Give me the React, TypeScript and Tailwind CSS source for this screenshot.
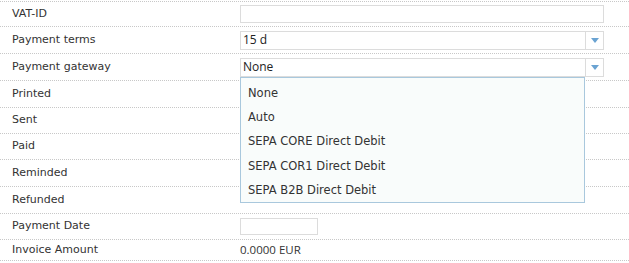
import React from "react";

const rows: { label: string; h: string; kind: string }[] = [
  { label: "VAT-ID", h: "h-[25px]", kind: "input" },
  { label: "Payment terms", h: "h-[27px]", kind: "terms" },
  { label: "Payment gateway", h: "h-[27px]", kind: "gateway" },
  { label: "Printed", h: "h-[27px]", kind: "none" },
  { label: "Sent", h: "h-[26px]", kind: "none" },
  { label: "Paid", h: "h-[26px]", kind: "none" },
  { label: "Reminded", h: "h-[27px]", kind: "none" },
  { label: "Refunded", h: "h-[27px]", kind: "none" },
  { label: "Payment Date", h: "h-[26px]", kind: "date" },
  { label: "Invoice Amount", h: "h-[21px]", kind: "amount" },
];

const openSans = { fontFamily: '"Open Sans", "Noto Sans", sans-serif' };

function Arrow() {
  return (
    <svg width="8" height="5" viewBox="0 0 8 5">
      <path d="M0 0 H8 L4 5 Z" fill="#6aa3d2" />
    </svg>
  );
}

function Select({ value }: { value: string }) {
  return (
    <div className="flex h-[19px] w-[364px] border border-[#dcdcdc] bg-white">
      <div className="flex flex-1 items-center pl-[2px] text-[12px] text-[#222]" style={openSans}>
        {value}
      </div>
      <div className="flex w-[18px] items-center justify-center border-l border-[#dcdcdc]">
        <Arrow />
      </div>
    </div>
  );
}

export default function App() {
  const items = ["None", "Auto", "SEPA CORE Direct Debit", "SEPA COR1 Direct Debit", "SEPA B2B Direct Debit"];
  return (
    <div
      className="relative h-[263px] w-[629px] overflow-hidden bg-white pt-[1px] text-[11px] text-[#333]"
      style={{ fontFamily: '"DejaVu Sans", Verdana, sans-serif' }}
    >
      <div className="border-b border-dotted border-[#c8c8c8]">
        {rows.map((r) => (
          <div key={r.label} className={`flex items-center border-t border-dotted border-[#c8c8c8] ${r.h}`}>
            <div className="w-[240px] pl-[12px]">{r.label}</div>
            <div className="flex-1">
              {r.kind === "input" && <div className="h-[18px] w-[364px] border border-[#dcdcdc] bg-white" />}
              {r.kind === "terms" && <Select value="15 d" />}
              {r.kind === "gateway" && <Select value="None" />}
              {r.kind === "date" && <div className="h-[17px] w-[78px] border border-[#dcdcdc] bg-white" />}
              {r.kind === "amount" && (
                <div className="text-[11.5px] text-[#333]" style={openSans}>
                  0.0000 EUR
                </div>
              )}
            </div>
          </div>
        ))}
      </div>
      <div className="absolute left-[240px] top-[77px] h-[126px] w-[345px] border border-[#a9c8dd] bg-[#f9fcfb] pt-[3px]">
        {items.map((it) => (
          <div key={it} className="flex h-[24.4px] items-center pl-[7px] text-[11.5px] text-[#333]">
            {it}
          </div>
        ))}
      </div>
    </div>
  );
}
